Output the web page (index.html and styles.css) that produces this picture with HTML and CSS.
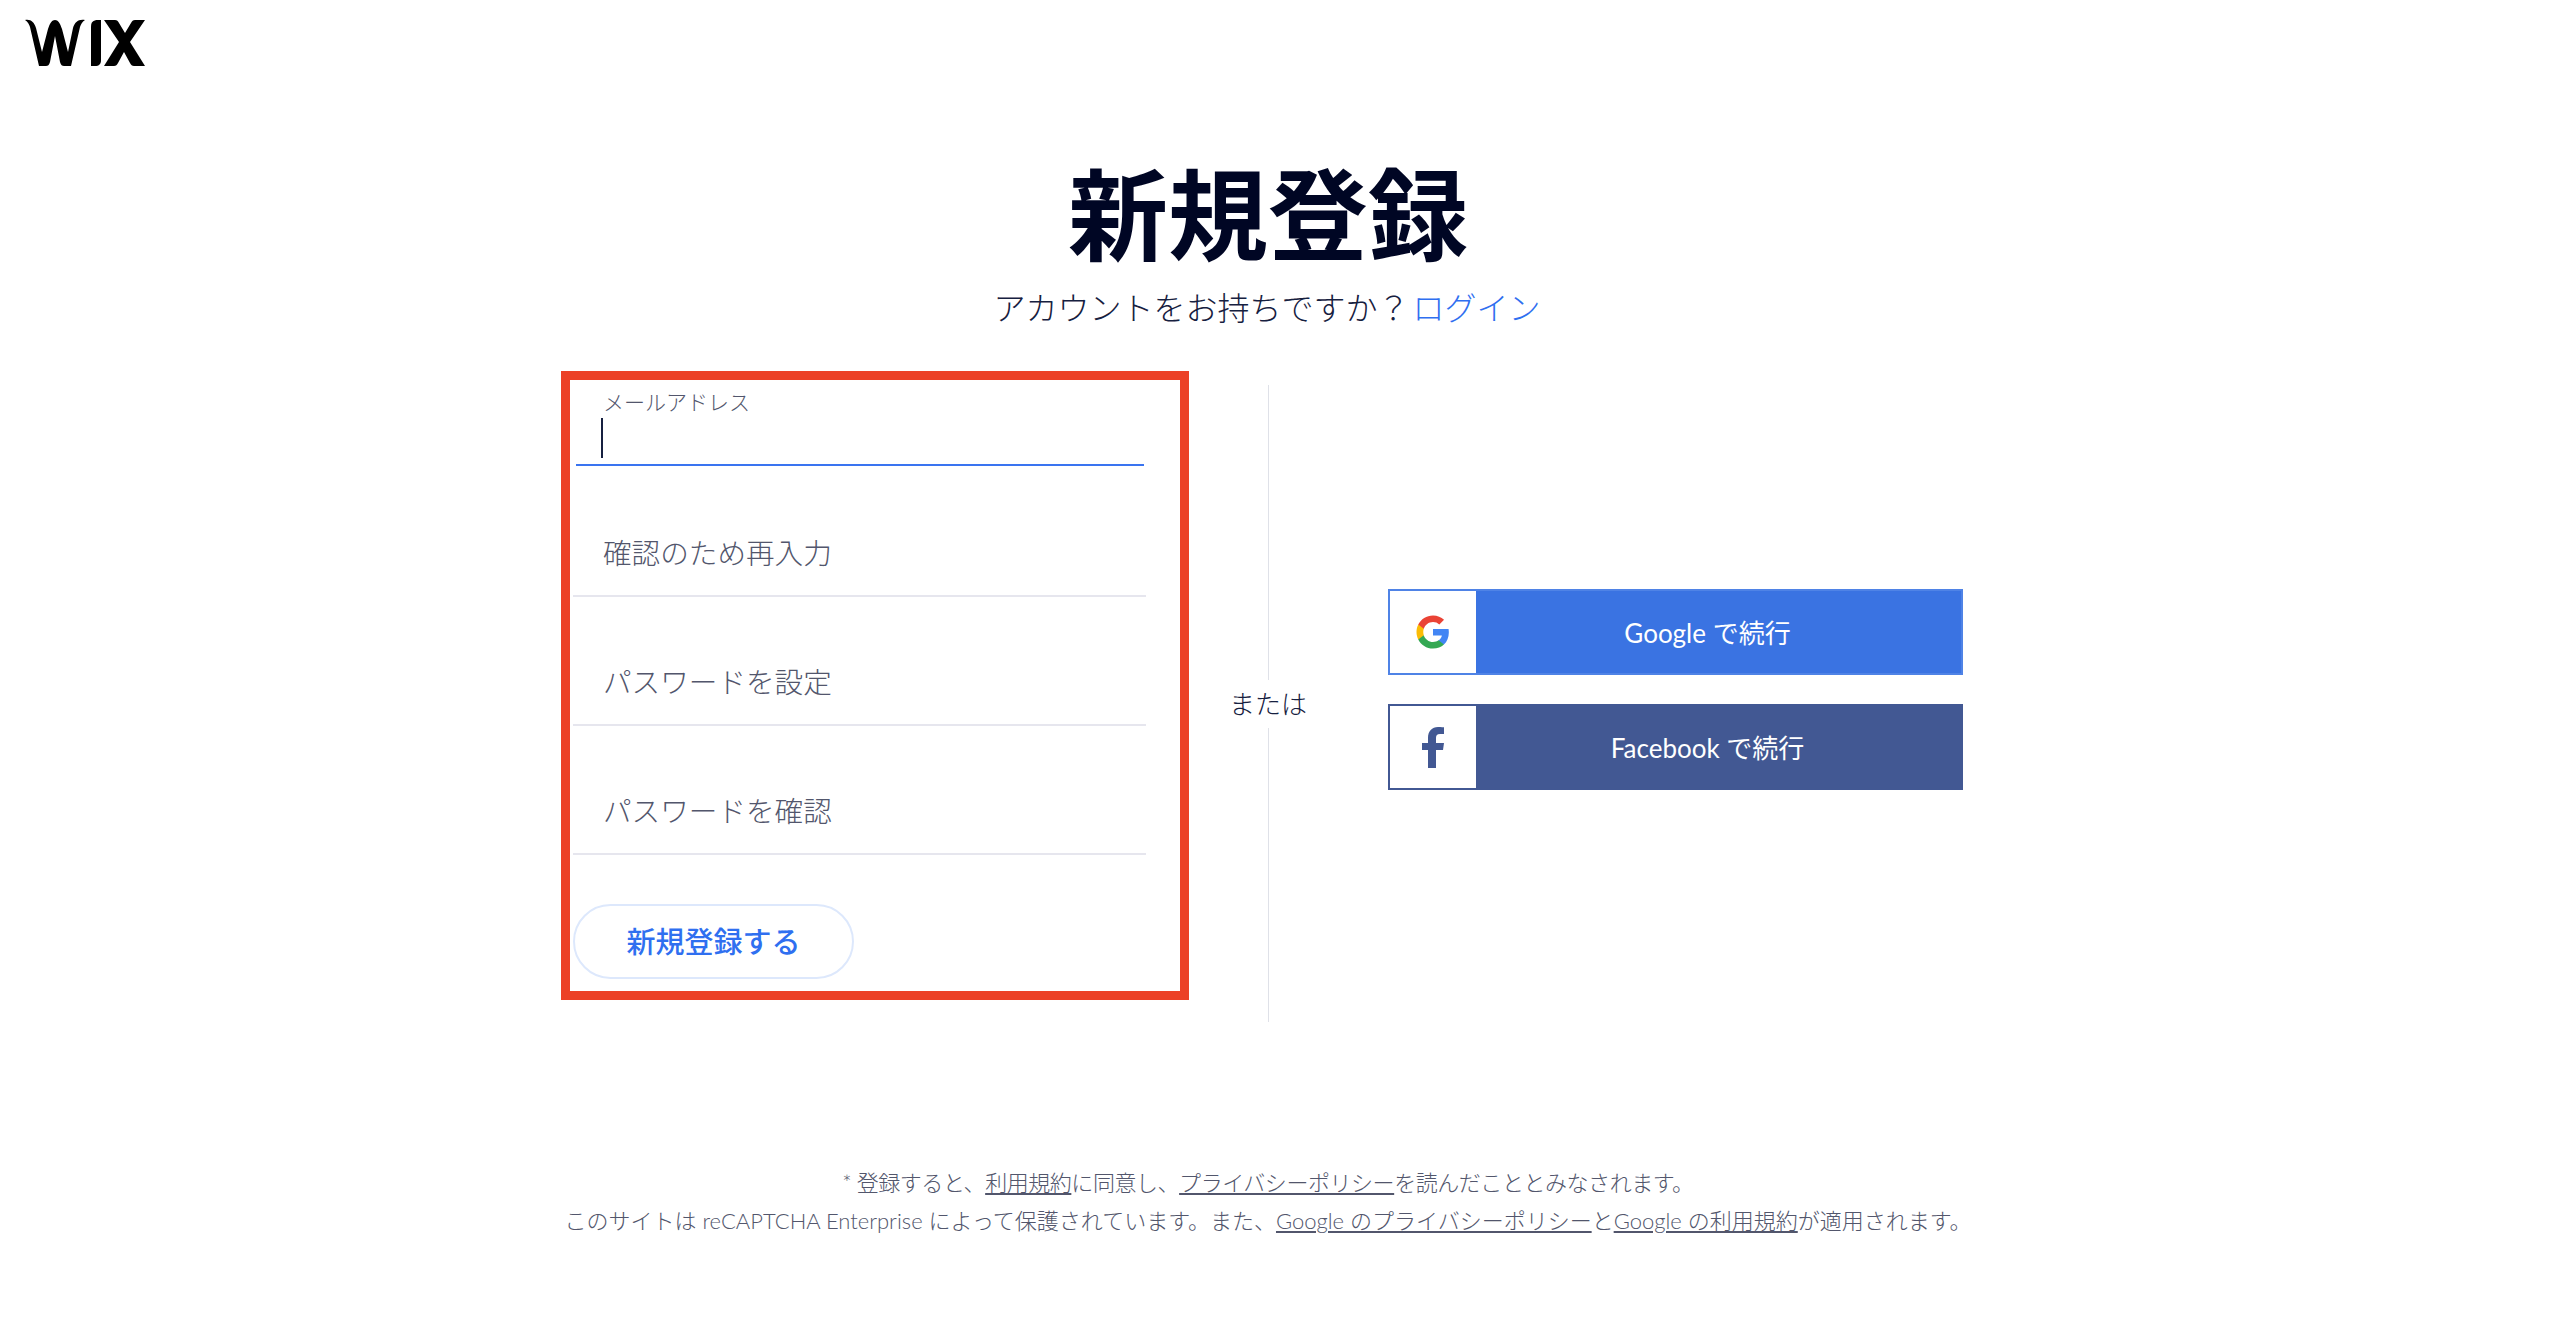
FILE: index.html
```html
<!DOCTYPE html>
<html lang="ja">
<head>
<meta charset="utf-8">
<title>新規登録</title>
<link rel="stylesheet" href="styles.css">
</head>
<body>
<header class="top">
  <svg class="logo" viewBox="0 0 122 48" aria-label="WIX">
    <path class="wix" d="M0 1C6 0 9 3 11 9L17 33 23 10C25 4 27 1 30 1 33 1 35 4 37 10L43 33 48 9C50 3 53 0 60 1 57 3 56 5 55 8L46 47H39C37 47 36 46 35 43L30 17 25 43C24 46 23 47 21 47H14L5 8C4 5 3 3 0 1Z"/>
    <path class="wix" d="M66 8c0-5 2-7 7-7h3v40c0 4-2 6-6 6h-4z"/>
    <path class="wix" d="M79 1h11c2 0 3 1 4 3l6 10 6-10c1-2 2-3 4-3h10l-15 22 15 24h-11c-2 0-3-1-4-3l-6-11-6 11c-1 2-2 3-4 3H79l15-24z"/>
  </svg>
</header>
<main class="page">
  <h1 class="title">新規登録</h1>
  <p class="sub">アカウントをお持ちですか？<a class="link" href="#">ログイン</a></p>
  <section class="columns">
    <form class="form">
      <div class="field field-active">
        <span class="float">メールアドレス</span>
        <span class="caret"></span>
      </div>
      <div class="field field-second"><span class="ph">確認のため再入力</span></div>
      <div class="field"><span class="ph">パスワードを設定</span></div>
      <div class="field"><span class="ph">パスワードを確認</span></div>
      <button class="submit" type="button">新規登録する</button>
    </form>
    <div class="divider">
      <span class="rule"></span>
      <span class="or">または</span>
      <span class="rule"></span>
    </div>
    <div class="social">
      <div class="sbtn sbtn-g">
        <span class="sicon">
          <svg class="gicon" viewBox="0 0 48 48">
            <path fill="#4285F4" d="M45.12 24.5c0-1.56-.14-3.06-.4-4.5H24v8.51h11.84c-.51 2.75-2.06 5.08-4.39 6.64v5.52h7.11c4.16-3.83 6.56-9.47 6.56-16.17z"/>
            <path fill="#34A853" d="M24 46c5.94 0 10.92-1.97 14.56-5.33l-7.11-5.52c-1.97 1.32-4.49 2.1-7.45 2.1-5.73 0-10.58-3.87-12.31-9.07H4.34v5.7C7.96 41.07 15.4 46 24 46z"/>
            <path fill="#FBBC05" d="M11.69 28.18C11.25 26.86 11 25.45 11 24s.25-2.86.69-4.18v-5.7H4.34C2.85 17.09 2 20.45 2 24c0 3.55.85 6.91 2.34 9.88l7.35-5.7z"/>
            <path fill="#EA4335" d="M24 10.75c3.23 0 6.13 1.11 8.41 3.29l6.31-6.31C34.91 4.18 29.93 2 24 2 15.4 2 7.96 6.93 4.34 14.12l7.35 5.7c1.73-5.2 6.58-9.07 12.31-9.07z"/>
          </svg>
        </span>
        <span class="stext">Google で続行</span>
      </div>
      <div class="sbtn sbtn-f">
        <span class="sicon">
          <svg class="ficon" viewBox="0 0 22 41">
            <path fill="#425893" d="M6 41V23H0v-7h6v-5C6 4 10 0 16 0c3 0 6 .3 6 .3V7h-4c-3 0-4 1.5-4 4v5h8l-1 7h-7v18z"/>
          </svg>
        </span>
        <span class="stext">Facebook で続行</span>
      </div>
    </div>
  </section>
  <footer class="foot">
    <p class="foot-first">* 登録すると、<a href="#">利用規約</a>に同意し、<a href="#">プライバシーポリシー</a>を読んだこととみなされます。</p>
    <p>このサイトは reCAPTCHA Enterprise によって保護されています。また、<a href="#">Google のプライバシーポリシー</a>と<a href="#">Google の利用規約</a>が適用されます。</p>
  </footer>
</main>
</body>
</html>
```

FILE: styles.css
```css
* { box-sizing: border-box; }
html, body { margin: 0; height: 100%; background: #fff; }
body {
  font-family: Lato, "Noto Sans CJK JP", sans-serif;
  color: #000624;
  overflow: hidden;
}
.top { height: 68px; padding: 19px 0 0 25px; }
.logo { display: block; width: 122px; height: 48px; }
.logo .wix { fill: #000; }
.page { display: flex; flex-direction: column; align-items: center; }
.title {
  margin: 96px 0 0 -24px;
  font-size: 100px;
  line-height: 100px;
  font-weight: 700;
  color: #000624;
}
.sub {
  margin: 22px 0 0 -26px;
  font-size: 32px;
  line-height: 44px;
  font-weight: 300;
  color: #162040;
}
.link { margin-left: 3px; color: #2f6ff0; text-decoration: none; }
.columns {
  align-self: flex-start;
  display: flex;
  margin: 41px 0 0 561px;
}
.form {
  width: 628px;
  height: 629px;
  border: 9px solid #ec4126;
  padding: 0 34px 0 3px;
  display: flex;
  flex-direction: column;
  background: #fff;
}
.field {
  height: 129px;
  flex: none;
  border-bottom: 2px solid #e6e6ee;
  padding: 65px 0 0 30px;
}
.field-second { height: 131px; padding-top: 67px; }
.field-active {
  height: 86px;
  margin: 0 2px 0 3px;
  border-bottom: 2px solid #3a74f0;
  padding: 7px 0 0 27px;
  position: relative;
}
.float {
  display: block;
  font-size: 21px;
  line-height: 30px;
  font-weight: 300;
  color: #52566c;
}
.caret {
  position: absolute;
  left: 25px;
  top: 38px;
  width: 2px;
  height: 40px;
  background: #162040;
}
.ph {
  font-size: 28.6px;
  line-height: 40px;
  font-weight: 300;
  color: #52566c;
}
.submit {
  margin-top: 49px;
  width: 281px;
  height: 75px;
  flex: none;
  border: 2px solid #dde8fc;
  border-radius: 38px;
  background: #fff;
  font-family: inherit;
  font-size: 29px;
  font-weight: 500;
  color: #2f6ff0;
  padding: 0 0 3px;
}
.divider {
  margin: 14px 118px 0 77px;
  width: 4px;
  height: 637px;
  display: flex;
  flex-direction: column;
  align-items: center;
  flex: none;
}
.rule { flex: 1; width: 1px; background: #dfe1e8; }
.or {
  white-space: nowrap;
  font-size: 26px;
  line-height: 48px;
  font-weight: 300;
  color: #162040;
}
.social {
  width: 575px;
  flex: none;
  display: flex;
  flex-direction: column;
  gap: 29px;
  padding-top: 218px;
}
.sbtn {
  height: 86px;
  display: flex;
  align-items: center;
  color: #fff;
  border: 2px solid;
}
.sbtn-g { background: #3a73e2; border-color: #4f83e6; }
.sbtn-f { background: #425893; border-color: #425893; }
.sicon {
  width: 86px;
  height: 82px;
  flex: none;
  background: #fff;
  display: flex;
  align-items: center;
  justify-content: center;
}
.gicon { width: 36px; height: 36px; }
.ficon { width: 22px; height: 41px; }
.stext {
  flex: 1;
  text-align: center;
  padding: 0 22px 2px 0;
  font-size: 26px;
  font-weight: 400;
}
.foot {
  margin: 142px 0 0 -24px;
  text-align: center;
  font-size: 22px;
  line-height: 38px;
  font-weight: 300;
  color: #52566c;
}
.foot p { margin: 0; }
.foot .foot-first { letter-spacing: -.45px; }
.foot a { color: inherit; text-decoration: underline; }
```
